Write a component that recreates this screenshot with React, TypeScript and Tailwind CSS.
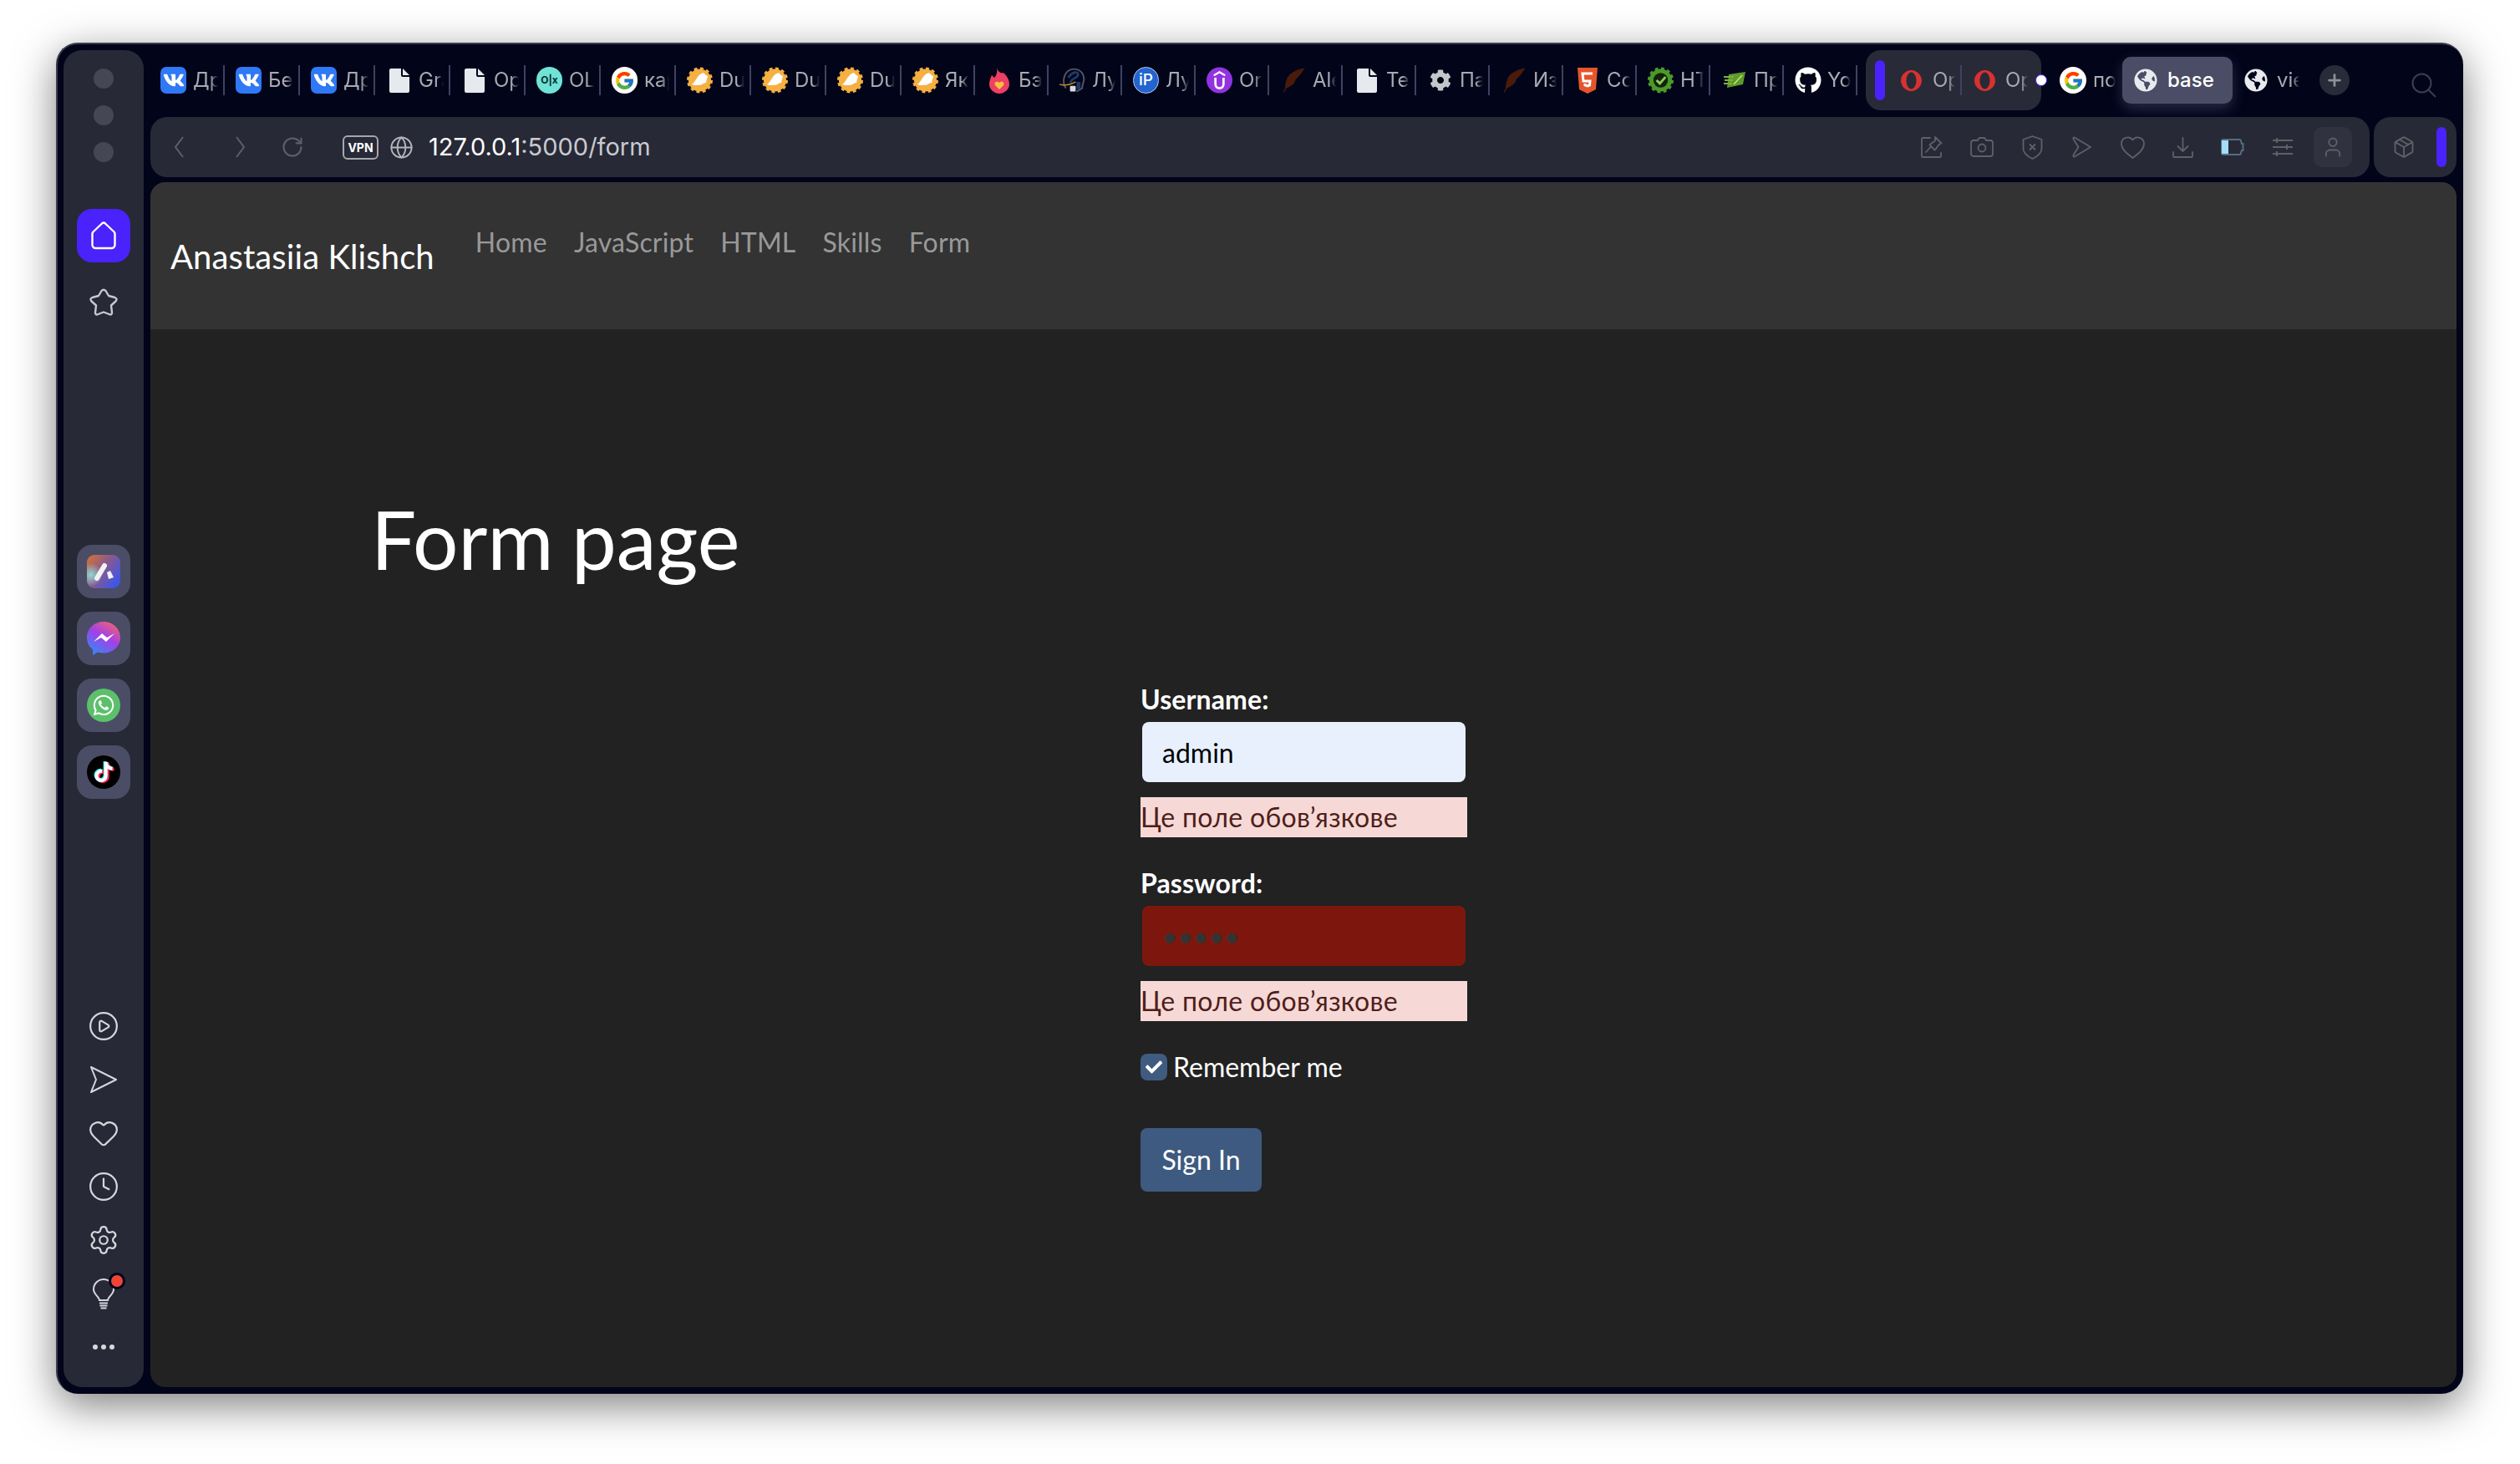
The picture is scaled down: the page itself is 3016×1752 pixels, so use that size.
import React from 'react'
import { Clock, Globe, Heart, Plus, PlayCircle, RotateCw, Settings, User, Package } from 'lucide-react'
import { FaVk, FaGithub, FaWhatsapp, FaTiktok, FaCog, FaGlobeAmericas, FaCheck } from 'react-icons/fa'
import { FcGoogle } from 'react-icons/fc'

const VkIcon = () => (
  <span className="flex h-8 w-[31px] items-center justify-center rounded-[7px] bg-[#2f78f6] text-white">
    <FaVk size={26} />
  </span>
)

const FileIcon = () => (
  <svg width="24" height="29" viewBox="0 0 24 29" fill="#e6eaee">
    <path d="M2 0h12v8a2 2 0 0 0 2 2h8v17a2 2 0 0 1-2 2H2a2 2 0 0 1-2-2V2a2 2 0 0 1 2-2z" />
    <path d="M16 0l8 8h-8z" />
  </svg>
)

const GoogleIcon = () => (
  <span className="flex h-8 w-8 items-center justify-center rounded-full bg-white">
    <FcGoogle size={25} />
  </span>
)

const OlxIcon = () => (
  <span className="flex h-8 w-8 items-center justify-center rounded-full bg-[#6fe3d6] text-[12px] font-bold text-[#0b2f33]">
    O|x
  </span>
)

const DuIcon = () => (
  <svg width="32" height="32" viewBox="0 0 32 32">
    <circle cx="16" cy="16" r="14" fill="#f5b041" />
    <circle cx="16" cy="16" r="14.5" fill="none" stroke="#f5b041" strokeWidth="3" strokeDasharray="4 3.6" />
    <path d="M6 21c3-1 4-4 6-7 2-3 5-7 9-7 1 2 3 3 5 4-1 3-2 5-2 8-3 0-4 2-7 3-4 0-8 1-11-1z" fill="#fff" />
  </svg>
)

const FlameIcon = () => (
  <svg width="24" height="32" viewBox="0 0 24 32">
    <path d="M9 0c1 6 5 8 7 7l2 1c4 4 6 8 6 13 0 6-6 11-12 11S0 27 0 21c0-4 2-9 3-11l3 3c3-3 4-8 3-13z" fill="#ee3f64" />
    <path d="M12 27l-5-5c-2-3 2-6 5-3 3-3 7 0 5 3z" fill="#f5c33b" />
  </svg>
)

const HeadIcon = () => (
  <svg width="32" height="32" viewBox="0 0 32 32" fill="none">
    <path d="M8 26c-4-5-4-15 2-21 6-5 16-3 19 4 2 5 1 9 0 11l-1 6-7 4" stroke="#54565f" strokeWidth="2" />
    <path d="M11 13c5-8 12-8 12-4 0 5-9 4-9 10" stroke="#1e3a66" strokeWidth="3" />
    <path d="M0 21c6 2 13 1 20-3" stroke="#c9952f" strokeWidth="1.5" />
    <rect x="13" y="23" width="7" height="7" rx="1" fill="#d9dade" />
    <rect x="21" y="18" width="5" height="9" fill="#1e3a66" />
  </svg>
)

const IpIcon = () => (
  <span className="flex h-8 w-8 items-center justify-center rounded-full border border-[#b9c9ee] bg-[#2365cf] text-[19px] font-medium text-white">
    iP
  </span>
)

const UdemyIcon = () => (
  <svg width="32" height="32" viewBox="0 0 32 32">
    <circle cx="16" cy="16" r="16" fill="#9333e0" />
    <path d="M9 10l7-4 7 4" fill="none" stroke="#fff" strokeWidth="2.4" />
    <path d="M11 13v8a5 5 0 0 0 10 0v-8" fill="none" stroke="#fff" strokeWidth="2.8" />
  </svg>
)

const QuillIcon = () => (
  <svg width="32" height="32" viewBox="0 0 32 32" fill="#4a1a0a">
    <path d="M31 1C22 2 13 6 9 13c-2 5-3 9-3 13l-2 5 1 .5 3-6c4-1 8-4 10-7 1-2 1-3 1-3l3-3c3-3 6-8 9-12z" />
  </svg>
)

const GearIcon = () => (
  <span className="flex justify-center text-[#c4c6ca]">
    <FaCog size={26} />
  </span>
)

const Html5Icon = () => (
  <svg width="24" height="31" viewBox="0 0 24 31">
    <path d="M0 0h24l-2 26-10 5-10-5z" fill="#e5552c" />
    <path d="M18 7H6l1 9h8l-.5 5-2.5 1-3-1-.2-2" fill="none" stroke="#fff" strokeWidth="3" />
  </svg>
)

const CheckBadge = () => (
  <svg width="32" height="32" viewBox="0 0 32 32">
    <circle cx="16" cy="16" r="14" fill="#4b9a2a" />
    <circle cx="16" cy="16" r="14.5" fill="none" stroke="#4b9a2a" strokeWidth="3" strokeDasharray="4 3.6" />
    <circle cx="16" cy="16" r="9" fill="#14240c" />
    <path d="M11 16l4 4 7-8" fill="none" stroke="#8fce62" strokeWidth="3" />
  </svg>
)

const LeafIcon = () => (
  <svg width="26" height="20" viewBox="0 0 26 20">
    <path d="M6 3l20-3-3 15-19 4z" fill="#5d9a2e" />
    <path d="M0 6h12M1 10h10M0 14h10" stroke="#7fb03a" strokeWidth="2" />
    <path d="M12 15l10-11" stroke="#d3e06a" strokeWidth="1.5" />
  </svg>
)

const GithubIcon = () => (
  <span className="flex justify-center text-white">
    <FaGithub size={32} />
  </span>
)

const OperaIcon = () => (
  <svg width="25" height="25" viewBox="0 0 25 25" className="shrink-0">
    <path
      fillRule="evenodd"
      d="M12.5 0C19 0 25 5.6 25 12.5S19 25 12.5 25 0 19.4 0 12.5 6 0 12.5 0zm0 2.5c-3.3 0-6 4.5-6 10s2.7 10 6 10 6-4.500 6-10-2.700-10-6-10z"
      fill="#d9312f"
    />
  </svg>
)

const EarthIcon = () => (
  <span className="flex h-7 w-7 shrink-0 items-center justify-center rounded-full text-[#e9eaee]">
    <FaGlobeAmericas size={28} />
  </span>
)

const tabs: { icon: React.ReactNode; title: string; wide?: boolean }[] = [
  { icon: <VkIcon />, title: 'Дру', wide: true },
  { icon: <VkIcon />, title: 'Бес', wide: true },
  { icon: <VkIcon />, title: 'Дру', wide: true },
  { icon: <FileIcon />, title: 'Gra', wide: true },
  { icon: <FileIcon />, title: 'Opr', wide: true },
  { icon: <OlxIcon />, title: 'OLX', wide: true },
  { icon: <GoogleIcon />, title: 'кар', wide: true },
  { icon: <DuIcon />, title: 'Duo', wide: true },
  { icon: <DuIcon />, title: 'Duo', wide: true },
  { icon: <DuIcon />, title: 'Duo', wide: true },
  { icon: <DuIcon />, title: 'Як' },
  { icon: <FlameIcon />, title: 'Бэ' },
  { icon: <HeadIcon />, title: 'Лу' },
  { icon: <IpIcon />, title: 'Лу' },
  { icon: <UdemyIcon />, title: 'Or' },
  { icon: <QuillIcon />, title: 'Ale' },
  { icon: <FileIcon />, title: 'Tel' },
  { icon: <GearIcon />, title: 'Пар' },
  { icon: <QuillIcon />, title: 'Изу' },
  { icon: <Html5Icon />, title: 'Соз' },
  { icon: <CheckBadge />, title: 'HTM' },
  { icon: <LeafIcon />, title: 'Пр' },
  { icon: <GithubIcon />, title: 'Yo' },
]

const SideSlot = ({ children }: { children: React.ReactNode }) => (
  <div className="flex h-16 w-16 items-center justify-center text-[#d5d7de]">{children}</div>
)

const AppBox = ({ children }: { children: React.ReactNode }) => (
  <div className="flex h-16 w-16 items-center justify-center rounded-[18px] bg-[#4a4d65]">{children}</div>
)

const ToolSlot = ({ children }: { children: React.ReactNode }) => (
  <div className="flex w-[60px] items-center justify-center text-[#5f6168]">{children}</div>
)

const Sidebar = () => (
  <aside className="flex w-24 shrink-0 flex-col items-center rounded-[22px] bg-[#272936] pt-[22px] pb-4">
    <div className="flex flex-col gap-5">
      <span className="h-6 w-6 rounded-full bg-[#454755]" />
      <span className="h-6 w-6 rounded-full bg-[#454755]" />
      <span className="h-6 w-6 rounded-full bg-[#454755]" />
    </div>
    <div className="mt-14 flex h-16 w-16 items-center justify-center rounded-[18px] bg-[#4a22fb] text-white">
      <svg width="30" height="34" viewBox="0 0 30 34" fill="none" stroke="currentColor" strokeWidth="2.4" strokeLinejoin="round">
        <path d="M13 2.5a3 3 0 0 1 4 0l10.5 10a3 3 0 0 1 1 2.2V28a4 4 0 0 1-4 4H5.500a4 4 0 0 1-4-4V14.700a3 3 0 0 1 1-2.200z" />
      </svg>
    </div>
    <div className="mt-[31px] text-[#c7c9d0]">
      <svg width="36" height="34" viewBox="0 0 36 34" fill="none" stroke="currentColor" strokeWidth="2.4" strokeLinejoin="round" className="block">
        <path d="M15.5 3Q18 .5 20.5 3L24 9l7.5 2q3.500 1.500 1 4.500L27 20.500l1 8.500q0 3.500-3.500 2L18 28.500 11.500 31Q8 32.500 8 29l1-8.500-5.500-5Q1 12.500 4.500 11L12 9z" />
      </svg>
    </div>
    <div className="mt-[273px] flex flex-col gap-4">
      <AppBox>
        <svg width="40" height="40" viewBox="0 0 40 40">
          <defs>
            <linearGradient id="aria" x1="0" y1="0" x2="1" y2="0.7">
              <stop offset="0" stopColor="#d9742f" />
              <stop offset="0.5" stopColor="#8a5a8a" />
              <stop offset="1" stopColor="#3f55e8" />
            </linearGradient>
            <radialGradient id="ariaTeal" cx="0.12" cy="0.6" r="0.35">
              <stop offset="0" stopColor="#8fd8d8" />
              <stop offset="1" stopColor="#8fd8d8" stopOpacity="0" />
            </radialGradient>
          </defs>
          <rect width="40" height="40" rx="9" fill="url(#aria)" />
          <rect width="40" height="40" rx="9" fill="url(#ariaTeal)" />
          <path d="M12 28l9-15" stroke="#f2f2f2" strokeWidth="6" strokeLinecap="round" />
          <path d="M24 21l4-2 4 8-6 2z" fill="#f2f2f2" />
        </svg>
      </AppBox>
      <AppBox>
        <svg width="40" height="40" viewBox="0 0 40 40">
          <defs>
            <linearGradient id="msgr" x1="0.8" y1="0" x2="0.2" y2="1">
              <stop offset="0" stopColor="#f0656e" />
              <stop offset="0.45" stopColor="#a43fe8" />
              <stop offset="1" stopColor="#2f8cf5" />
            </linearGradient>
          </defs>
          <path d="M20 0C9 0 0 8 0 19c0 6 2.5 11 7 14.5V40l6-3.5c2 .6 4.5 1 7 1 11 0 20-8 20-18.500S31 0 20 0z" fill="url(#msgr)" />
          <path d="M8 24l10-10 6 5 9-5-10 10-6-5z" fill="#fff" />
        </svg>
      </AppBox>
      <AppBox>
        <span className="flex h-10 w-10 items-center justify-center rounded-full bg-[#5cc06b] text-white">
          <FaWhatsapp size={28} />
        </span>
      </AppBox>
      <AppBox>
        <span className="flex h-10 w-10 items-center justify-center rounded-full bg-black text-white">
          <FaTiktok size={24} className="[filter:drop-shadow(2px_1px_0_#fe2c55)_drop-shadow(-1px_-1px_0_#25f4ee)]" />
        </span>
      </AppBox>
    </div>
    <div className="mt-auto flex flex-col">
      <SideSlot>
        <PlayCircle size={38} strokeWidth={1.4} />
      </SideSlot>
      <SideSlot>
        <svg width="34" height="34" viewBox="0 0 34 34" fill="none" stroke="currentColor" strokeWidth="2" strokeLinejoin="round">
          <path d="M2 2l30 15L2 32l6-15z" />
        </svg>
      </SideSlot>
      <SideSlot>
        <Heart size={38} strokeWidth={1.4} />
      </SideSlot>
      <SideSlot>
        <Clock size={38} strokeWidth={1.4} />
      </SideSlot>
      <SideSlot>
        <Settings size={38} strokeWidth={1.4} />
      </SideSlot>
      <SideSlot>
        <span className="relative block">
          <svg width="26" height="37" viewBox="0 0 26 37" fill="none" stroke="currentColor" strokeWidth="2" className="block">
            <path d="M8 26c0-4-7-7-7-13a12 12 0 0 1 24 0c0 6-7 9-7 13z" />
            <path d="M8 29.5h10M8.5 32.5h9M9.5 35.5h7" />
          </svg>
          <span className="absolute -top-[4px] left-[22px] h-[14px] w-[14px] rounded-full bg-[#f04438] ring-[3px] ring-[#02041a]" />
        </span>
      </SideSlot>
      <SideSlot>
        <span className="flex gap-1">
          <span className="h-1.5 w-1.5 rounded-full bg-[#d5d7de]" />
          <span className="h-1.5 w-1.5 rounded-full bg-[#d5d7de]" />
          <span className="h-1.5 w-1.5 rounded-full bg-[#d5d7de]" />
        </span>
      </SideSlot>
    </div>
  </aside>
)

const TabStrip = () => (
  <div className="mb-2 -ml-px flex h-[72px] items-center font-['Inter',sans-serif] text-[24px] text-[#a9aab0]">
    {tabs.map((t, i) => (
      <div
        key={i}
        className={`flex h-9 shrink-0 items-center gap-2 border-r-2 border-[#3f4260] pr-[6px] pl-[13px] ${t.wide ? 'w-[90px]' : 'w-[88px]'}`}
      >
        <span className="flex w-[31px] shrink-0 justify-center">{t.icon}</span>
        <span className="overflow-hidden whitespace-nowrap [mask-image:linear-gradient(to_right,black_70%,transparent)]">{t.title}</span>
      </div>
    ))}
    {/* active tab island */}
    <div className="relative ml-[10px] flex h-[72px] w-[210px] shrink-0 items-center rounded-[18px] bg-[#282a38] pl-[11px]">
      <span className="h-12 w-3 shrink-0 rounded-full bg-[#4a22fb]" />
      <div className="ml-[19px] flex h-9 w-[73px] shrink-0 items-center gap-[13px] border-r-2 border-[#3f4260]">
        <OperaIcon />
        <span className="w-[27px] overflow-hidden whitespace-nowrap [mask-image:linear-gradient(to_right,black_70%,transparent)]">Op</span>
      </div>
      <div className="ml-[15px] flex h-9 w-[66px] shrink-0 items-center gap-[12px]">
        <OperaIcon />
        <span className="w-[27px] overflow-hidden whitespace-nowrap [mask-image:linear-gradient(to_right,black_70%,transparent)]">Op</span>
      </div>
      <span className="absolute top-[29px] right-[-7px] h-[14px] w-[14px] rounded-full border border-[#4a22fb] bg-white" />
    </div>
    <div className="ml-[22px] flex w-[75px] shrink-0 items-center gap-2">
      <GoogleIcon />
      <span className="w-[27px] overflow-hidden whitespace-nowrap [mask-image:linear-gradient(to_right,black_70%,transparent)]">по</span>
    </div>
    <div className="flex h-14 w-[132px] shrink-0 items-center gap-3 rounded-[10px] bg-[#4a4d65] pl-[14px] font-medium text-white shadow-[0_6px_16px_rgba(110,115,150,0.35)]">
      <EarthIcon />
      <span>base</span>
    </div>
    <div className="ml-[14px] flex w-[66px] shrink-0 items-center gap-[11px]">
      <EarthIcon />
      <span className="w-[27px] overflow-hidden whitespace-nowrap [mask-image:linear-gradient(to_right,black_70%,transparent)]">vie</span>
    </div>
    <span className="ml-[24px] flex h-9 w-9 shrink-0 items-center justify-center rounded-full bg-[#292b38] text-[#8f919c]">
      <Plus size={22} strokeWidth={3} />
    </span>
    <span className="mt-[12px] ml-[74px] text-[#3d3f4c]">
      <svg width="30" height="30" viewBox="0 0 30 30" fill="none" stroke="currentColor" strokeWidth="2" className="block">
        <circle cx="12.5" cy="12.5" r="11" />
        <path d="M20.5 20.5l8.5 8.5" />
      </svg>
    </span>
  </div>
)

const Toolbar = () => (
  <div className="mb-[6px] flex h-[72px] gap-[5px]">
    <div className="flex flex-1 items-center rounded-[20px] bg-[#272936] pr-[14px] font-['Inter',sans-serif]">
      <svg className="ml-[28px]" width="12" height="26" viewBox="0 0 12 26" fill="none" stroke="#5d5f6b" strokeWidth="2">
        <path d="M11 1L2 13l9 12" />
      </svg>
      <svg className="ml-[62px]" width="12" height="26" viewBox="0 0 12 26" fill="none" stroke="#5d5f6b" strokeWidth="2">
        <path d="M1 1l9 12-9 12" />
      </svg>
      <span className="ml-[42px] text-[#5d5f6b]">
        <RotateCw size={28} strokeWidth={1.8} className="block" />
      </span>
      <span className="ml-[46px] flex h-[29px] w-[43px] items-center justify-center rounded-[6px] border-2 border-[#a6a7ad] text-[14px] font-bold text-white">
        VPN
      </span>
      <span className="ml-[13px] text-[#b5b6bc]">
        <Globe size={29} strokeWidth={1.6} className="block" />
      </span>
      <span className="ml-[18px] text-[29px] text-white">
        127.0.0.1<span className="text-[#c9cad0]">:5000/form</span>
      </span>
      <div className="ml-auto flex h-full items-center">
        {/* pin to page */}
        <ToolSlot>
          <svg width="26" height="26" viewBox="0 0 26 26" fill="none" stroke="currentColor" strokeWidth="1.8" strokeLinejoin="round" strokeLinecap="round">
            <path d="M11 2H2a1.5 1.5 0 0 0-1 1.5V24a1 1 0 0 0 1 1h21a1 1 0 0 0 1-1v-4" />
            <path d="M17 1l7.5 7.5-3 1.5-3.5 5-1.5 1.5-6-6 1.5-1.5 5-3.5zM11.5 13L6 19" />
          </svg>
        </ToolSlot>
        <ToolSlot>
          <svg width="28" height="24" viewBox="0 0 28 24" fill="none" stroke="currentColor" strokeWidth="1.8">
            <path d="M9 4l1-2a2 2 0 0 1 2-1h4a2 2 0 0 1 2 1l1 2h5a3 3 0 0 1 3 3v13a3 3 0 0 1-3 3H4a3 3 0 0 1-3-3V7a3 3 0 0 1 3-3z" />
            <circle cx="14" cy="13" r="4.5" />
          </svg>
        </ToolSlot>
        <ToolSlot>
          <svg width="25" height="29" viewBox="0 0 25 29" fill="none" stroke="currentColor" strokeWidth="1.8" strokeLinejoin="round">
            <path d="M12.5 1l11 4v11c0 5-5 9-11 12C6.5 25 1.5 21 1.5 16V5z" />
            <path d="M9 10.5l7 7M16 10.5l-7 7" />
          </svg>
        </ToolSlot>
        <ToolSlot>
          <svg width="24" height="26" viewBox="0 0 24 26" fill="none" stroke="currentColor" strokeWidth="1.8" strokeLinejoin="round">
            <path d="M3 1.5l19 11.500L3 24.500c-1.500.5-2-.5-1.500-2L7.500 13 1.500 3.500C1 2 1.500 1 3 1.500z" />
          </svg>
        </ToolSlot>
        <ToolSlot>
          <svg width="29" height="27" viewBox="0 0 29 27" fill="none" stroke="currentColor" strokeWidth="1.8" strokeLinejoin="round">
            <path d="M14.5 26C8 21 1 16 1 9a7.5 7.5 0 0 1 13.5-4.5A7.5 7.5 0 0 1 28 9c0 7-7 12-13.5 17z" />
          </svg>
        </ToolSlot>
        <ToolSlot>
          <svg width="25" height="25" viewBox="0 0 25 25" fill="none" stroke="currentColor" strokeWidth="1.8" strokeLinecap="round">
            <path d="M12.5 1v15M6.5 11l6 6 6-6M1 18v5a1 1 0 0 0 1 1h21a1 1 0 0 0 1-1v-5" />
          </svg>
        </ToolSlot>
        <ToolSlot>
          <svg width="28" height="20" viewBox="0 0 28 20" fill="none">
            <path d="M3 1h19a2 2 0 0 1 2 2l1 3h1.5v8H25l-1 3a2 2 0 0 1-2 2H3a2 2 0 0 1-2-2V3a2 2 0 0 1 2-2z" stroke="#566c84" strokeWidth="2" />
            <rect x="1" y="2" width="8" height="16" fill="#a5dcf7" />
          </svg>
        </ToolSlot>
        <ToolSlot>
          <svg width="24" height="22" viewBox="0 0 24 22" fill="none" stroke="currentColor" strokeWidth="2">
            <path d="M0 3h24M0 11h24M0 19h24M5 0v6M17 8v6M5 16v6" />
          </svg>
        </ToolSlot>
        <ToolSlot>
          <span className="flex h-12 w-[46px] items-center justify-center rounded-[10px] bg-[#30323f]">
            <User size={28} strokeWidth={1.6} />
          </span>
        </ToolSlot>
      </div>
    </div>
    <div className="flex w-[99px] shrink-0 items-center justify-between rounded-[20px] bg-[#272936] pr-3 pl-[22px] text-[#5f6168]">
      <Package size={28} strokeWidth={1.6} />
      <span className="h-12 w-3 rounded-full bg-[#4a22fb]" />
    </div>
  </div>
)

const FormField = ({ label, type, value, bg, text }: { label: string; type: string; value: string; bg: string; text: string }) => (
  <div className="mb-[31px]">
    <label className="block h-[51px] text-[32px] leading-[48px] font-bold tracking-[0.1px] text-white">{label}</label>
    <input
      readOnly
      type={type}
      value={value}
      className={`mx-[2px] block h-[72px] w-[387px] rounded-[8px] px-[24px] text-[32px] outline-none ${bg} ${text}`}
    />
    <div className="mt-[18px] h-12 bg-[#f6d9d6] text-[32px] leading-[48px] tracking-[0.3px] text-[#4e1e1b]">Це поле обов’язкове</div>
  </div>
)

const WebPage = () => (
  <main className="min-h-0 flex-1 overflow-hidden rounded-[18px] bg-[#222222] font-['Lato','Noto_Sans',sans-serif]">
    <nav className="flex h-[176px] items-start bg-[#333333] pl-6">
      <a className="mt-[59px] text-[40px] leading-[60px] tracking-[0.1px] text-white">Anastasiia Klishch</a>
      <div className="mt-[48px] ml-[33px] flex text-[32px] leading-[48px] tracking-[0.2px] text-[#999999]">
        <a className="px-4">Home</a>
        <a className="px-4">JavaScript</a>
        <a className="px-4">HTML</a>
        <a className="px-4">Skills</a>
        <a className="px-4">Form</a>
      </div>
    </nav>
    <h1 className="pt-[193px] pl-[264px] text-[96px] leading-[115px] font-normal text-white [word-spacing:-3px]">Form page</h1>
    <form className="mt-[111px] ml-[1185px] w-[391px]">
      <FormField label="Username:" type="text" value="admin" bg="bg-[#e8f0fe]" text="text-black" />
      <FormField label="Password:" type="password" value="admin" bg="bg-[#7d170e]" text="text-[#333333]" />
      <div className="flex h-12 items-center gap-[7px] text-[32px] text-white">
        <span className="flex h-8 w-8 items-center justify-center rounded-[8px] bg-[#3f5b80]">
          <FaCheck size={20} />
        </span>
        Remember me
      </div>
      <button type="button" className="mt-[49px] block h-[76px] w-[145px] rounded-[8px] bg-[#3e5a80] text-[32px] text-white">
        Sign In
      </button>
    </form>
  </main>
)

const App: React.FC = () => {
  return (
    <div className="h-[1752px] w-[3016px] overflow-hidden bg-white pt-[51px] pl-[67px]">
      <div className="flex h-[1617px] w-[2881px] gap-2 rounded-[26px] border-t-2 border-l-2 border-[#3d3e4c] bg-[#02041a] pt-[7px] pr-2 pb-2 pl-[7px] shadow-[0_14px_50px_rgba(0,0,0,0.5)]">
        <Sidebar />
        <div className="flex min-w-0 flex-1 flex-col">
          <TabStrip />
          <Toolbar />
          <WebPage />
        </div>
      </div>
    </div>
  )
}

export default App
